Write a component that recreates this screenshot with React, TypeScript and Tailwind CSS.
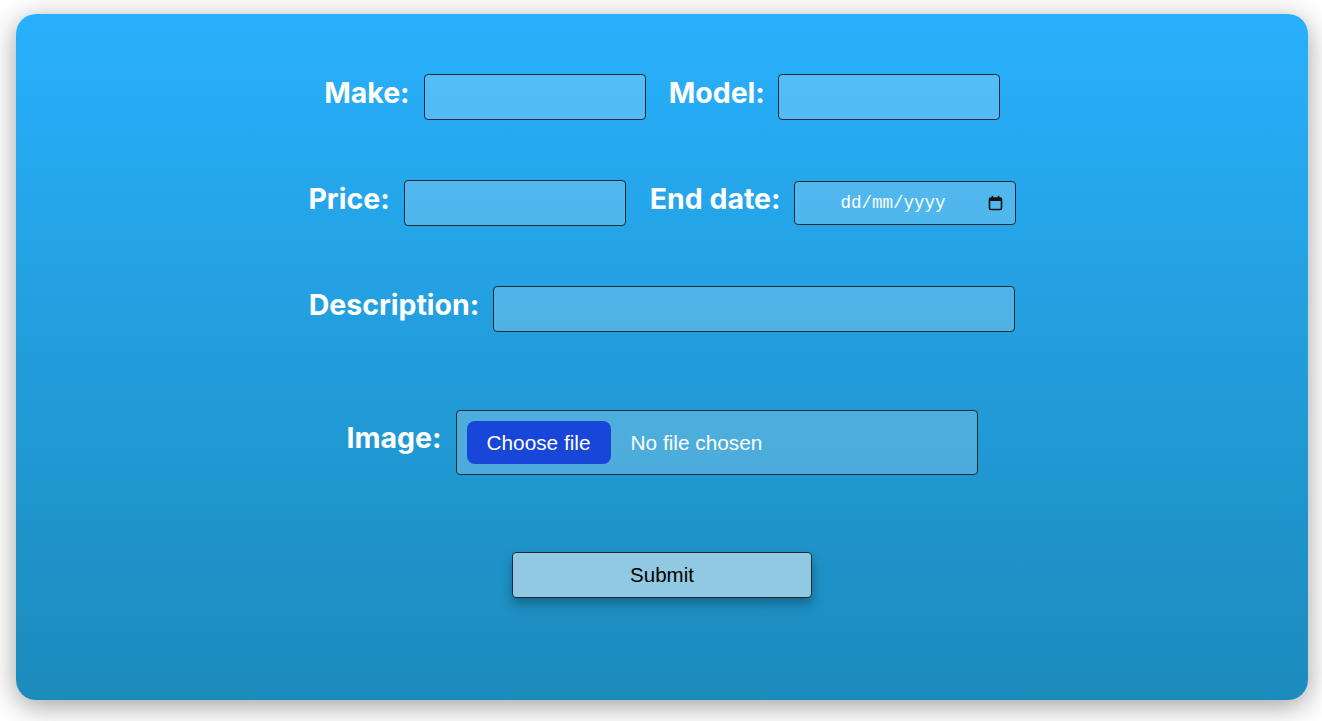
import React from "react";

const LABEL = "text-[28.5px] font-bold text-white leading-none [font-family:Inter,'Noto_Sans',sans-serif]";
const FIELD = "h-[46px] rounded-[4px] border border-[#1e2a33] bg-white/20";

function Label({ children, className = "" }: { children: React.ReactNode; className?: string }) {
  return <span className={`${LABEL} mb-[8px] ${className}`}>{children}</span>;
}

function CalendarIcon() {
  return (
    <svg width="15" height="16" viewBox="0 0 15 16" fill="none">
      <rect x="1.5" y="3" width="12" height="11.5" rx="1.5" stroke="#111" strokeWidth="1.6" />
      <rect x="1.5" y="3" width="12" height="3" fill="#111" />
      <rect x="3.6" y="0.8" width="1.6" height="3" fill="#111" />
      <rect x="9.8" y="0.8" width="1.6" height="3" fill="#111" />
    </svg>
  );
}

export default function App() {
  return (
    <div className="min-h-[721px] w-full bg-white pt-[14px] [font-family:'Liberation_Sans',Arial,sans-serif]">
      <div className="ml-4 flex h-[686px] w-[1292px] flex-col items-center rounded-[20px] bg-gradient-to-b from-[#29b0fc] to-[#1c8bbc] pt-[60px] shadow-[0_6px_28px_rgba(0,0,0,0.38)]">
        {/* make / model */}
        <div className="flex items-center">
          <Label>Make:</Label>
          <input className={`${FIELD} ml-[14px] w-[222px]`} />
          <Label className="ml-[23px]">Model:</Label>
          <input className={`${FIELD} ml-[13px] w-[222px]`} />
        </div>

        {/* price / end date */}
        <div className="mt-[60px] flex items-center">
          <Label>Price:</Label>
          <input className={`${FIELD} ml-[14px] w-[222px]`} />
          <Label className="ml-[24px]">End date:</Label>
          <div className="ml-[13px] flex h-[44px] w-[222px] items-center rounded-[4px] border border-[#1e2a33] bg-white/20 pl-[46px] pr-[12px]">
            <span className="flex-1 text-[17.5px] text-white [font-family:'Liberation_Mono','Courier_New',monospace]">dd/mm/yyyy</span>
            <CalendarIcon />
          </div>
        </div>

        {/* description */}
        <div className="mt-[60px] flex items-center">
          <Label>Description:</Label>
          <input className={`${FIELD} ml-[14px] w-[522px]`} />
        </div>

        {/* image */}
        <div className="mt-[78px] flex items-center">
          <Label>Image:</Label>
          <div className="ml-[14px] flex h-[65px] w-[522px] items-center rounded-[4px] border border-[#1e2a33] bg-white/20 px-[10px]">
            <button className="h-[43px] w-[144px] rounded-[8px] bg-[#1746d8] text-[20.8px] text-white">Choose file</button>
            <span className="ml-[20px] text-[20.8px] text-white">No file chosen</span>
          </div>
        </div>

        {/* submit */}
        <button className="mt-[77px] h-[46px] w-[300px] rounded-[4px] border border-[#1e2a33] bg-[#91c9e3] text-[20.5px] text-black shadow-[0_6px_12px_rgba(0,0,0,0.3)]">
          Submit
        </button>
      </div>
    </div>
  );
}
